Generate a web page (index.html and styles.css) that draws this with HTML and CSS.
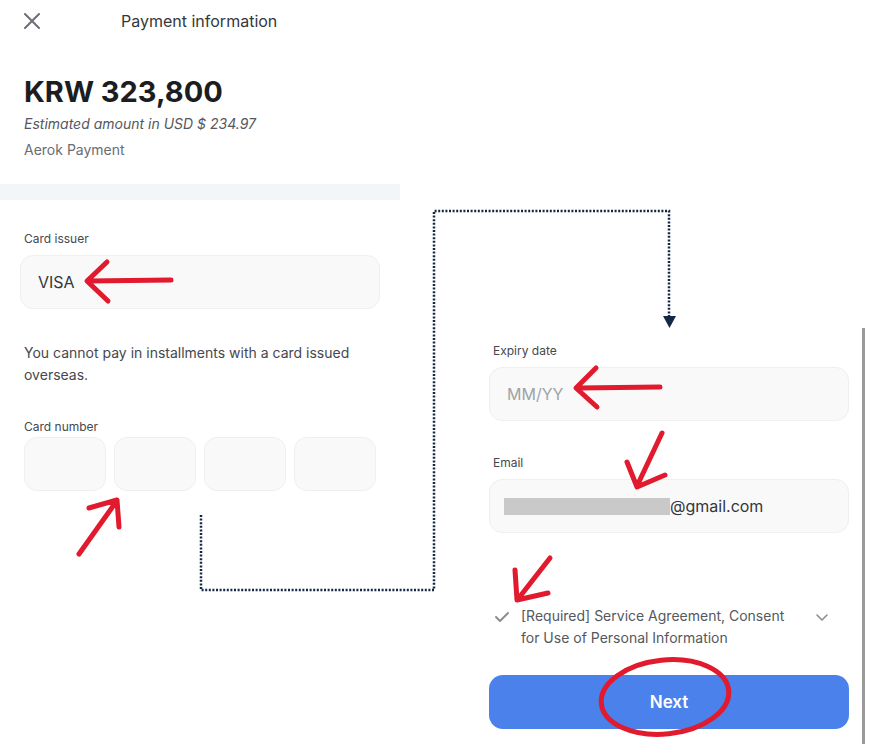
FILE: index.html
```html
<!DOCTYPE html>
<html lang="en">
<head>
    <meta charset="UTF-8">
    <meta name="viewport" content="width=device-width, initial-scale=1.0">
    <title>Payment information</title>
    <link rel="stylesheet" href="styles.css">
</head>
<body>
    <div class="page">
        <div class="panel left">
            <div class="topbar">
                <svg class="close" width="16" height="16" viewBox="0 0 16 16">
                    <path d="M1 1 L15 15 M15 1 L1 15" stroke="#6b6e73" stroke-width="2" stroke-linecap="round" fill="none"/>
                </svg>
                <span class="title">Payment information</span>
            </div>

            <div class="amount">
                <h1>KRW 323,800</h1>
                <p class="usd">Estimated amount in USD $ 234.97</p>
                <p class="merchant">Aerok Payment</p>
            </div>

            <div class="band"></div>

            <div class="form">
                <div class="label first">Card issuer</div>
                <div class="field">VISA</div>

                <p class="notice">You cannot pay in installments with a card issued overseas.</p>

                <div class="label">Card number</div>
                <div class="card-boxes">
                    <div class="box"></div>
                    <div class="box"></div>
                    <div class="box"></div>
                    <div class="box"></div>
                </div>
            </div>
        </div>

        <div class="panel right">
            <div class="label top">Expiry date</div>
            <div class="field placeholder">MM/YY</div>

            <div class="label">Email</div>
            <div class="field email"><span class="redacted"></span>@gmail.com</div>

            <div class="agree">
                <svg class="check" width="16" height="12" viewBox="0 0 16 12">
                    <path d="M2 6 L6 10 L14 2" stroke="#8a8d92" stroke-width="2" fill="none" stroke-linecap="round" stroke-linejoin="round"/>
                </svg>
                <span class="agree-text">[Required] Service Agreement, Consent for Use of Personal Information</span>
                <svg class="chevron" width="14" height="10" viewBox="0 0 14 10">
                    <path d="M2 3 L7 8 L12 3" stroke="#8a8d92" stroke-width="1.6" fill="none" stroke-linecap="round" stroke-linejoin="round"/>
                </svg>
            </div>

            <button class="next">Next</button>
        </div>
    </div>

    <!-- annotations drawn over the screenshot -->
    <svg class="marks" width="869" height="744" viewBox="0 0 869 744">
        <polyline class="flow" points="201,515 201,590 434,590 434,211 669,211 669,316"/>
        <polygon points="663,316 676,316 669.5,328" fill="#142744"/>

        <g class="red">
            <path d="M171 280 L88 281 M107 262 L87 281 L108 301"/>
            <path d="M79 554 L116 502 M89 508 L117 500 L119 527"/>
            <path d="M660 387 L578 388 M596 368 L576 388 L597 407"/>
            <path d="M662 433 L637 486 M627 462 L637 487 L665 475"/>
            <path d="M550 558 L518 599 M515 570 L517 600 L548 593"/>
            <ellipse cx="665" cy="697" rx="64" ry="37" transform="rotate(-6 665 697)"/>
        </g>
    </svg>
</body>
</html>
```

FILE: styles.css
```css
body {
    margin: 0;
    font-family: Inter, "Noto Sans", sans-serif;
    color: #2b2d31;
    background: #ffffff;
    width: 869px;
    height: 744px;
    overflow: hidden;
    position: relative;
}
.page {
    display: flex;
    align-items: flex-start;
}
.panel {
    box-sizing: border-box;
    padding: 0 24px;
}
.left {
    width: 400px;
    padding: 0;
}
.right {
    width: 396px;
    margin-left: 69px;
    margin-top: 328px;
    padding: 14px 13px 30px 24px;
    border-right: 3px solid #9a9a9a;
    height: 416px;
}
.topbar {
    height: 42px;
    display: flex;
    align-items: center;
    padding-left: 24px;
}
.title {
    margin-left: 81px;
    font-size: 16px;
    color: #35373b;
}
.amount {
    padding: 32px 24px 0;
}
h1 {
    margin: 0;
    font-size: 29px;
    line-height: 36px;
    font-weight: 700;
    color: #1b1d21;
}
.usd {
    margin: 3px 0 0;
    font-size: 14px;
    line-height: 22px;
    font-style: italic;
    color: #55585d;
}
.merchant {
    margin: 4px 0 0;
    font-size: 14px;
    line-height: 22px;
    color: #6a6d72;
}
.band {
    height: 16px;
    margin-top: 23px;
    background: #f4f5f7;
}
.form {
    padding: 0 24px;
}
.label {
    font-size: 12px;
    line-height: 18px;
    color: #45484d;
    margin-top: 32px;
    margin-bottom: 1px;
}
.label.first {
    margin-top: 30px;
    margin-bottom: 7px;
}
.right .label {
    margin-top: 33px;
    margin-bottom: 7px;
}
.right .label.top {
    margin-top: 0;
}
.field {
    box-sizing: border-box;
    margin: 0 -4px;
    height: 54px;
    padding-left: 17px;
    display: flex;
    align-items: center;
    font-size: 16px;
    color: #33363a;
    background: #f9f9fa;
    border: 1px solid #efeff1;
    border-radius: 13px;
}
.right .field {
    width: 360px;
    margin: 0 0 0 -4px;
}
.placeholder {
    color: #a0a3a8;
}
.redacted {
    display: inline-block;
    width: 166px;
    height: 17px;
    margin-left: -3px;
    background: #c9c9c9;
}
.notice {
    margin: 33px 0 0;
    font-size: 14px;
    line-height: 22px;
    color: #45484d;
}
.card-boxes {
    display: flex;
    gap: 8px;
}
.box {
    box-sizing: border-box;
    width: 82px;
    height: 54px;
    background: #f9f9fa;
    border: 1px solid #efeff1;
    border-radius: 13px;
}
.agree {
    display: flex;
    align-items: flex-start;
    margin-top: 72px;
    width: 336px;
}
.check {
    margin-top: 6px;
    margin-left: 1px;
    flex-shrink: 0;
}
.agree-text {
    margin-left: 11px;
    font-size: 14px;
    line-height: 22px;
    color: #55585d;
    width: 272px;
}
.chevron {
    margin-left: auto;
    margin-top: 7px;
    flex-shrink: 0;
}
.next {
    display: block;
    width: 360px;
    height: 54px;
    margin: 26px 0 0 -4px;
    border: none;
    border-radius: 14px;
    background: #4a81ea;
    color: #ffffff;
    font-family: Inter, "Noto Sans", sans-serif;
    font-size: 17px;
    font-weight: 600;
}
.marks {
    position: absolute;
    top: 0;
    left: 0;
    pointer-events: none;
}
.flow {
    fill: none;
    stroke: #142744;
    stroke-width: 2.5;
    stroke-dasharray: 2 1.6;
}
.red path,
.red ellipse {
    fill: none;
    stroke: #e11a2e;
    stroke-width: 5;
    stroke-linecap: round;
    stroke-linejoin: round;
}
```
